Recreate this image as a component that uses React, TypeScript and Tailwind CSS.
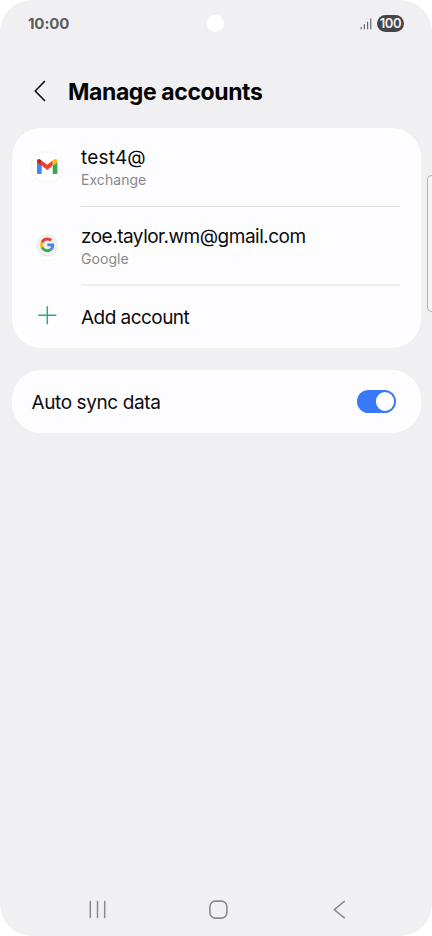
import type { ReactNode } from 'react';

function StatusBar() {
  return (
    <div className="grid h-[47px] grid-cols-3 items-center pl-7 pr-7 text-[#5c5c5e]">
      <span className="text-[15px] leading-none font-bold tracking-[-0.1px]">10:00</span>
      <span className="ml-[54px] size-[17px] rounded-full bg-white" />
      <div className="flex items-center justify-end gap-[5px]">
        <svg width="12" height="12" viewBox="0 0 12 12" fill="none" stroke="#68686a" strokeWidth="1.2" strokeLinecap="round">
          <path d="M1.2 9.4v1.4M4.4 6.6v4.2M7.6 4v6.8M10.8 0.8v10" />
        </svg>
        <span className="flex h-[17px] w-[27px] items-center justify-center rounded-full bg-[#454547] text-[13px] leading-none font-semibold tracking-[-0.3px] text-[#f0f0f2]">
          100
        </span>
      </div>
    </div>
  );
}

function GmailIcon() {
  return (
    <svg width="32" height="32" viewBox="0 0 32 32">
      <rect x="1" y="1" width="30" height="30" rx="12" fill="#fff" stroke="#f3f3f5" />
      <path d="M6 11v11q0 1.1 1.1 1.1h3.6V14.2z" fill="#4285f4" />
      <path d="M26.4 11v11q0 1.1-1.1 1.1h-3.6V14.2z" fill="#34a853" />
      <path d="M10.7 9.6l5.5 4.1 5.5-4.1v5.2l-5.5 4.2-5.5-4.2z" fill="#ea4335" />
      <path d="M6 11.3V10q0-1.9 1.9-1.9 1 0 1.7.6l1.1.9v5.2z" fill="#c5221f" />
      <path d="M26.4 11.3V10q0-1.9-1.9-1.9-1 0-1.7.6l-1.1.9v5.2z" fill="#fbbc04" />
    </svg>
  );
}

function GoogleIcon() {
  return (
    <svg className="mb-0.5" width="32" height="32" viewBox="0 0 32 32">
      <rect x="1" y="1" width="30" height="30" rx="12" fill="#fff" stroke="#fafafb" />
      <circle cx="16.3" cy="16.6" r="10.8" fill="#dededf" />
      <circle cx="16.3" cy="16" r="10.8" fill="#f1f1f2" />
      <g transform="translate(9.1 8.6) scale(.3)">
        <path fill="#EA4335" d="M24 9.5c3.54 0 6.71 1.22 9.21 3.6l6.85-6.85C35.9 2.38 30.47 0 24 0 14.62 0 6.51 5.38 2.56 13.22l7.98 6.19C12.43 13.72 17.74 9.5 24 9.5z" />
        <path fill="#4285F4" d="M46.98 24.55c0-1.57-.15-3.09-.38-4.55H24v9.02h12.94c-.58 2.96-2.26 5.48-4.78 7.18l7.73 6c4.51-4.18 7.09-10.36 7.09-17.65z" />
        <path fill="#FBBC05" d="M10.53 28.59c-.48-1.45-.76-2.99-.76-4.59s.27-3.14.76-4.59l-7.98-6.19C.92 16.46 0 20.12 0 24c0 3.88.92 7.54 2.56 10.78l7.97-6.19z" />
        <path fill="#34A853" d="M24 48c6.48 0 11.93-2.13 15.89-5.81l-7.73-6c-2.15 1.45-4.92 2.3-8.16 2.3-6.26 0-11.57-4.22-13.47-9.91l-7.98 6.19C6.51 42.62 14.62 48 24 48z" />
      </g>
    </svg>
  );
}

function Account({ icon, name, kind }: { icon: ReactNode; name: ReactNode; kind: string }) {
  return (
    <div className="flex h-[78px] items-center">
      <div className="w-[50px] shrink-0">{icon}</div>
      <div className="flex flex-col gap-px pt-0.5">
        {name}
        <span className="text-[14px] leading-[18px] tracking-[0.05px] text-[#88888b]">{kind}</span>
      </div>
    </div>
  );
}

export default function App() {
  return (
    <div className="h-[936px] w-[432px] overflow-hidden bg-white font-['Inter','Roboto',sans-serif]">
      <div className="relative flex h-full flex-col rounded-[32px] bg-[#f0f0f2]">
        <StatusBar />
        <header className="flex h-[80.5px] items-center pt-2 pl-[34px]">
          <svg width="12" height="22" viewBox="0 0 12 22" fill="none" stroke="#0a0a0a" strokeWidth="1.6" strokeLinecap="round" strokeLinejoin="round">
            <path d="M10.5 1.5L1.2 11l9.3 9.5" />
          </svg>
          <h1 className="mt-px ml-[22px] text-[23px] leading-7 font-bold tracking-[-0.4px] text-[#050505]">Manage accounts</h1>
        </header>

        <section className="mx-[11.5px] h-[220px] rounded-[29px] bg-[#fdfdff] pr-[21px] pl-[19.5px] text-[#0b0b0b]">
          <Account
            icon={<GmailIcon />}
            kind="Exchange"
            name={<span className="text-[19px] leading-6 tracking-[0.2px]">test4@</span>}
          />
          <div className="ml-[50px] h-px bg-[#dedee0]" />
          <Account
            icon={<GoogleIcon />}
            kind="Google"
            name={<span className="text-[19px] leading-6 tracking-[-0.5px]">zoe.taylor.wm@gmail.com</span>}
          />
          <div className="-mt-px ml-[50px] h-0.5 bg-[#eeeef0]" />
          <div className="flex h-[61px] items-center">
            <svg className="mb-px ml-[7px] mr-6" width="19" height="19" viewBox="0 0 19 19" stroke="#2cab74" strokeWidth="1.5" strokeLinecap="round">
              <path d="M9.3 0.8v17M0.8 9.3h17" />
            </svg>
            <span className="mt-[3px] text-[19px] leading-6 tracking-[-0.54px]">Add account</span>
          </div>
        </section>

        <section className="mx-[11.5px] mt-[22.5px] flex h-[63px] items-center justify-between rounded-[29px] bg-[#fdfdff] pr-[24.5px] pl-5 text-[#0b0b0b]">
          <span className="mt-0.5 text-[19px] leading-6 tracking-[-0.4px]">Auto sync data</span>
          <span className="flex h-[23px] w-[39.5px] items-center justify-end rounded-full bg-[#3a78fa] pr-[2px]">
            <span className="size-[18.5px] rounded-full bg-white" />
          </span>
        </section>

        <nav className="mt-auto flex h-[53px] items-center gap-[101px] pl-[88px]">
          <svg width="19" height="19" viewBox="0 0 19 19" stroke="#8b8b8d" strokeWidth="1.5" strokeLinecap="round">
            <path d="M2.3 1.5v16M9.5 1.5v16M16.7 1.5v16" />
          </svg>
          <svg width="20" height="20" viewBox="0 0 20 20" fill="none" stroke="#8b8b8d" strokeWidth="1.6">
            <rect x="1.9" y="1.1" width="17" height="17" rx="5.5" />
          </svg>
          <svg className="ml-1" width="14" height="20" viewBox="0 0 14 20" fill="none" stroke="#8b8b8d" strokeWidth="1.5" strokeLinecap="round" strokeLinejoin="round">
            <path d="M11.3 1.4L1.3 9.6l10 8.2" />
          </svg>
        </nav>
        <div className="absolute top-[175px] right-0 h-[137px] w-[5px] rounded-l-[5px] border border-r-0 border-[#b2b2b4] bg-[#f5f5f6]" />
      </div>
    </div>
  );
}
